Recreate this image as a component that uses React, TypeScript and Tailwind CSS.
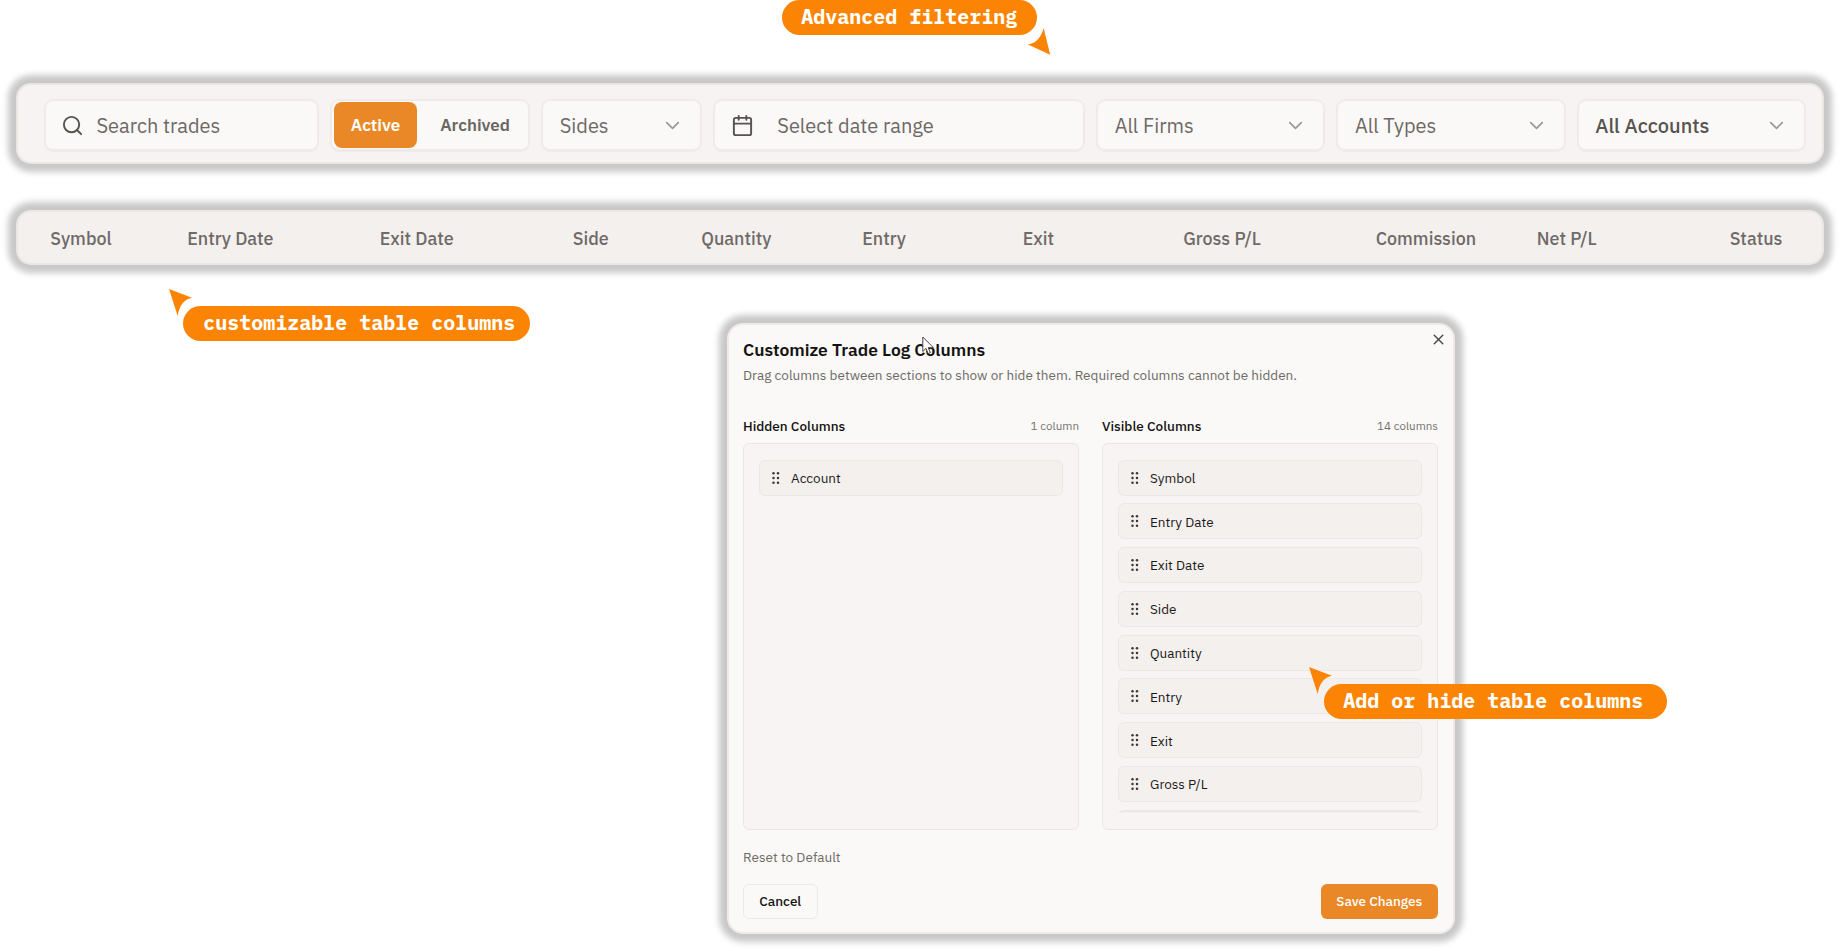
import { Calendar, ChevronDown, Search, X } from 'lucide-react'

interface Column {
  label: string;
  width: string;
}

const tableColumns: Column[] = [
  { label: "Symbol", width: "w-[137px]" },
  { label: "Entry Date", width: "w-[192.5px]" },
  { label: "Exit Date", width: "w-[193px]" },
  { label: "Side", width: "w-[128.5px]" },
  { label: "Quantity", width: "w-[161px]" },
  { label: "Entry", width: "w-[160.5px]" },
  { label: "Exit", width: "w-[160.5px]" },
  { label: "Gross P/L", width: "w-[192.5px]" },
  { label: "Commission", width: "w-[161px]" },
  { label: "Net P/L", width: "w-[193px]" },
  { label: "Status", width: "w-[60px]" },
];

const visibleColumns = [
  "Symbol",
  "Entry Date",
  "Exit Date",
  "Side",
  "Quantity",
  "Entry",
  "Exit",
  "Gross P/L",
];

const panelShadow = "shadow-[0_0_6px_8px_rgba(0,0,0,0.22)]";
const field = "h-[53px] rounded-[9px] border-2 border-b-[3px] border-[#f0ebe8] bg-[#faf9f7]";

function SelectField({ label, className }: { label: string; className: string }) {
  return (
    <button className={`${field} flex shrink-0 items-center justify-between pl-[16.5px] pr-[16px] text-[20px] ${className}`}>
      <span className="pt-[1px]">{label}</span>
      <ChevronDown size={23} strokeWidth={1.8} className="text-[#9b9896]" />
    </button>
  )
}

function FilterBar() {
  return (
    <div className={`flex h-[81px] w-[1808px] items-center gap-[11px] rounded-[15px] border-2 border-[#ebe6e2] bg-[#f7f3f2] pt-[4px] pl-[26.4px] text-[#6d6865] ${panelShadow}`}>
      <div className={`${field} flex w-[274.7px] shrink-0 items-center pl-[15px]`}>
        <Search size={23} strokeWidth={2} className="text-[#57534f]" />
        <span className="ml-[12px] pt-[1px] text-[20px]">Search trades</span>
      </div>
      <div className={`${field} flex w-[200.1px] shrink-0 items-center pl-[1.6px] text-[17px] font-semibold`}>
        <button className="h-[46px] w-[83.5px] rounded-lg bg-[#ea8827] pt-[1px] text-white">Active</button>
        <button className="ml-[23px] pt-[1px] text-[#6b6663]">Archived</button>
      </div>
      <SelectField label="Sides" className="w-[160.5px]" />
      <div className={`${field} flex w-[372.5px] shrink-0 items-center pl-[16.6px]`}>
        <Calendar size={23} strokeWidth={2} className="text-[#57534f]" />
        <span className="ml-[23px] pt-[1px] text-[20px]">Select date range</span>
      </div>
      <SelectField label="All Firms" className="w-[229.3px]" />
      <SelectField label="All Types" className="w-[229.3px]" />
      <SelectField label="All Accounts" className="w-[229.3px] font-medium text-[#57534f]" />
    </div>
  )
}

function TableHeader() {
  return (
    <div className={`mt-[46px] flex h-[55px] w-[1808px] items-center rounded-[15px] border-2 border-[#ebe6e2] bg-[#f4f0ee] pl-[32.2px] text-[17.9px] font-medium text-[#6e6a68] ${panelShadow}`}>
      {tableColumns.map((column) => (
        <span key={column.label} className={`shrink-0 whitespace-nowrap pt-[4px] ${column.width}`}>{column.label}</span>
      ))}
    </div>
  )
}

function Grip() {
  return (
    <svg width="8" height="14" viewBox="0 0 8 14" fill="#3b3836">
      {[2.2, 7, 11.8].map((y) => (
        <g key={y}>
          <circle cx="1.5" cy={y} r="1.25" />
          <circle cx="6" cy={y} r="1.25" />
        </g>
      ))}
    </svg>
  )
}

function ColumnList({ title, count, items }: { title: string; count: string; items: string[] }) {
  return (
    <div className="w-[336px]">
      <div className="flex h-5 items-center justify-between">
        <h3 className="pt-[1px] text-[13.55px] font-medium text-[#141211]">{title}</h3>
        <span className="text-[11.6px] text-[#75716f]">{count}</span>
      </div>
      <div className="mt-[7px] h-[387px] rounded-[6px] border border-[#ebe6e3] bg-[#f8f4f3] px-[15px] pt-[16px]">
        <div className="flex h-[353px] flex-col gap-[7.8px] overflow-hidden">
          {items.map((item) => (
            <div key={item} className="flex h-[36px] shrink-0 items-center rounded-[6px] border border-[#ebe7e4] bg-[#f4f0ee] pl-[12px] text-[13.5px] text-[#1c1a19]">
              <Grip />
              <span className="ml-[11px] pt-[1px]">{item}</span>
            </div>
          ))}
          {/* next row, scrolled out of view */}
          {items.length > 7 && (
            <div className="h-[36px] shrink-0 rounded-[6px] border-2 border-[#ebe7e4] bg-[#f4f0ee]" />
          )}
        </div>
      </div>
    </div>
  )
}

function CustomizeDialog() {
  return (
    <div className={`ml-[710.5px] mt-[58px] h-[611px] w-[728px] rounded-[16px] border-2 border-[#f0e9e5] bg-[#faf9f7] px-[14.5px] ${panelShadow}`}>
      <div className="flex justify-between pt-[13px]">
        <h2 className="text-[17.45px] leading-6 font-semibold text-[#141211]">Customize Trade Log Columns</h2>
        <X size={17} strokeWidth={2} className="-mt-[7px] -mr-[9px] text-[#4a4745]" />
      </div>
      <p className="mt-[3px] text-[13.55px] leading-5 text-[#6d6966]">
        Drag columns between sections to show or hide them. Required columns cannot be hidden.
      </p>
      <div className="mt-[30.5px] flex justify-between">
        <ColumnList title="Hidden Columns" count="1 column" items={["Account"]} />
        <ColumnList title="Visible Columns" count="14 columns" items={visibleColumns} />
      </div>
      <button className="mt-[17.5px] block text-[13.55px] leading-5 text-[#6d6966]">Reset to Default</button>
      <div className="mt-[16.5px] flex justify-between text-[13.5px] font-medium">
        <button className="h-[35px] w-[74.5px] rounded-[6px] border border-[#ece8e5] text-[#141211]">Cancel</button>
        <button className="h-[35px] w-[117.5px] rounded-[6px] bg-[#ea8827] text-white">Save Changes</button>
      </div>
    </div>
  )
}

function Callout({ text, className }: { text: string; className: string }) {
  return (
    <div className={`absolute flex h-[35px] items-center justify-center rounded-full bg-[#fb8404] pb-[2px] font-['IBM_Plex_Mono','Liberation_Mono',monospace] text-[20px] font-bold whitespace-pre text-white ${className}`}>
      {text}
    </div>
  )
}

function Pointer({ className }: { className: string }) {
  return (
    <svg className={`absolute ${className}`} width="24" height="28" viewBox="0 0 24 28" fill="#fb8404">
      <path d="M0 0L23 8.7Q11 11 8.7 27Z" />
    </svg>
  )
}

export default function App() {
  return (
    <main className="relative h-[951px] w-[1840px] overflow-hidden bg-white pl-[16px] pt-[83px] font-['IBM_Plex_Sans',Roboto,sans-serif]">
      <FilterBar />
      <TableHeader />
      <CustomizeDialog />

      <Callout text="Advanced filtering" className="top-0 left-[781.5px] w-[255.5px]" />
      <svg className="absolute top-[27px] left-[1027px]" width="24" height="29" viewBox="0 0 24 29" fill="#fb8404">
        <path d="M23.2 27.8L1 17.4Q13 15.5 16.6 1Z" />
      </svg>
      <Callout text="customizable table columns" className="top-[306px] left-[183px] w-[346.5px] pl-[6px]" />
      <Pointer className="top-[289px] left-[169px]" />
      <Callout text="Add or hide table columns" className="top-[684px] left-[1323.5px] w-[343.5px] pr-[4px]" />
      <Pointer className="top-[667px] left-[1309px]" />

      <svg className="absolute top-[336px] left-[922px]" width="13" height="20" viewBox="0 0 13 20" fill="#fff" stroke="#444" strokeWidth="1">
        <path d="M.8 1V15.5L4 12.4L6.2 17.6L8.4 16.6L6.2 11.7H11.4Z" />
      </svg>
    </main>
  )
}
